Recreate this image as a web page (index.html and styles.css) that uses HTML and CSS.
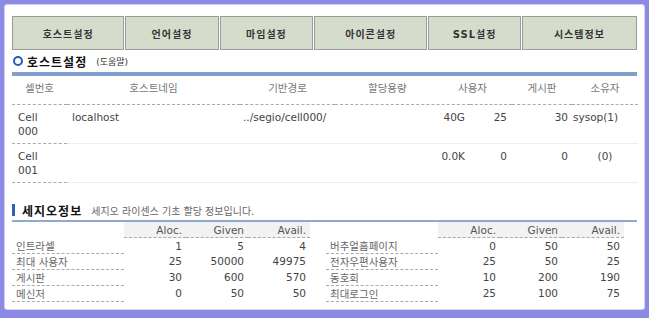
FILE: index.html
```html
<!DOCTYPE html>
<html lang="ko">
<head>
  <meta charset="UTF-8">
  <title>호스트설정</title>
  <link rel="stylesheet" href="styles.css">
</head>
<body>

  <div class="frame">
    <ul class="tabs">
      <li class="t1">호스트설정</li>
      <li class="t2">언어설정</li>
      <li class="t3">마임설정</li>
      <li class="t4">아이콘설정</li>
      <li class="t5">SSL설정</li>
      <li class="t6">시스템정보</li>
    </ul>

    <div class="title">
      <span class="ring"></span>
      <b>호스트설정</b>
      <span class="help">(도움말)</span>
    </div>
    <div class="bar"></div>

    <table class="hosts">
      <colgroup>
        <col style="width:55px">
        <col style="width:173px">
        <col style="width:95px">
        <col style="width:135px">
        <col style="width:42px">
        <col style="width:60px">
        <col style="width:66px">
      </colgroup>
      <thead>
        <tr>
          <th>셀번호</th>
          <th>호스트네임</th>
          <th>기반경로</th>
          <th class="c4">할당용량</th>
          <th class="c5">사용자</th>
          <th>게시판</th>
          <th>소유자</th>
        </tr>
      </thead>
      <tbody>
        <tr>
          <td class="c1">Cell<br>000</td>
          <td>localhost</td>
          <td class="c3">../segio/cell000/</td>
          <td class="num">40G</td>
          <td class="num">25</td>
          <td class="num">30</td>
          <td class="c7">sysop(1)</td>
        </tr>
        <tr>
          <td class="c1">Cell<br>001</td>
          <td></td>
          <td class="c3"></td>
          <td class="num">0.0K</td>
          <td class="num">0</td>
          <td class="num">0</td>
          <td class="mid">(0)</td>
        </tr>
      </tbody>
    </table>

    <div class="title2">
      <span class="mark"></span>
      <b>세지오정보</b>
      <span class="desc">세지오 라이센스 기초 할당 정보입니다.</span>
    </div>
    <div class="line"></div>

    <div class="lic">
      <table class="quota">
        <tr>
          <th class="lbl"></th>
          <th>Aloc.</th>
          <th>Given</th>
          <th>Avail.</th>
        </tr>
        <tr><td class="lbl">인트라셀</td><td>1</td><td>5</td><td>4</td></tr>
        <tr><td class="lbl">최대 사용자</td><td>25</td><td>50000</td><td>49975</td></tr>
        <tr><td class="lbl">게시판</td><td>30</td><td>600</td><td>570</td></tr>
        <tr><td class="lbl">메신저</td><td>0</td><td>50</td><td>50</td></tr>
      </table>

      <table class="quota right">
        <tr>
          <th class="lbl"></th>
          <th>Aloc.</th>
          <th>Given</th>
          <th>Avail.</th>
        </tr>
        <tr><td class="lbl">버추얼홈페이지</td><td>0</td><td>50</td><td>50</td></tr>
        <tr><td class="lbl">전자우편사용자</td><td>25</td><td>50</td><td>25</td></tr>
        <tr><td class="lbl">동호회</td><td>10</td><td>200</td><td>190</td></tr>
        <tr><td class="lbl">최대로그인</td><td>25</td><td>100</td><td>75</td></tr>
      </table>
    </div>
  </div>

</body>
</html>
```

FILE: styles.css
```css
body {
  margin: 0;
  padding: 4px;
  background: #8b8be6;
  font-family: "DejaVu Sans", "Noto Sans CJK KR", sans-serif;
  font-size: 10.5px;
  color: #444;
}

.frame {
  background: #fff;
  border: 1px solid #d6d0f4;
  border-radius: 3px;
  height: 306px;
  box-sizing: border-box;
  padding: 11px 7px 0 7px;
}

.tabs {
  list-style: none;
  display: flex;
  gap: 1px;
  margin: 0;
  padding: 0;
}

.tabs li {
  height: 34px;
  box-sizing: border-box;
  background: #d5dccc;
  border: 1px solid #9a9a9a;
  display: flex;
  align-items: center;
  justify-content: center;
  font-weight: bold;
  font-size: 10px;
  letter-spacing: 1px;
  color: #333;
}

.t1 { width: 113px; }
.t2 { width: 94px; }
.t3 { width: 94px; }
.t4 { width: 114px; }
.t5 { width: 93px; }
.t6 { width: 116px; }

.title {
  height: 22px;
  display: flex;
  align-items: center;
  padding-left: 1px;
}

.ring {
  width: 6px;
  height: 6px;
  border: 2.5px solid #1d5eb6;
  border-radius: 50%;
  margin-right: 4px;
}

.title b {
  font-size: 12px;
  letter-spacing: 1px;
  color: #111;
  margin-right: 9px;
}

.help {
  font-size: 9px;
  color: #333;
}

.bar {
  height: 4px;
  background: #809fca;
}

.hosts {
  width: 626px;
  table-layout: fixed;
  border-collapse: collapse;
}

.hosts th {
  font-weight: normal;
  color: #777;
  line-height: 14px;
  padding: 5px 0 9px;
  border-bottom: 1px dashed #aaa;
  text-align: center;
  white-space: nowrap;
}

.hosts th.c4 {
  text-align: left;
  padding-left: 33px;
}

.hosts th.c5 {
  text-align: left;
  text-indent: -12px;
}

.hosts td {
  vertical-align: top;
  padding: 5px 5px 5px;
  line-height: 14px;
  height: 28px;
  border-bottom: 1px solid #eee;
  color: #444;
  white-space: nowrap;
  overflow: visible;
}

.hosts td.c1 {
  border-bottom: 1px dashed #aaa;
  padding-left: 6px;
}

.hosts td.c3 { padding-left: 3px; }
.hosts td.c7 { padding-left: 1px; padding-right: 0; }

.num { text-align: right; }
.hosts td.num:nth-child(6) { padding-right: 4px; }
.mid { text-align: center; }

.title2 {
  display: flex;
  align-items: center;
  margin-top: 17px;
  height: 20px;
}

.mark {
  width: 3px;
  height: 12px;
  background: #2f62b0;
  margin-right: 7px;
}

.title2 b {
  font-size: 12px;
  letter-spacing: 1px;
  color: #111;
  margin-right: 9px;
}

.desc {
  color: #666;
  font-size: 10px;
}

.line {
  height: 2px;
  background: #8fa9cf;
}

.lic {
  display: flex;
  justify-content: space-between;
}

.quota {
  border-collapse: collapse;
}

.quota th {
  font-weight: normal;
  color: #555;
  background: #f2f2f2;
  text-align: right;
  padding: 1px 4px 0;
  height: 14px;
  border-bottom: 1px dashed #aaa;
}

.quota th.lbl {
  background: none;
  border-bottom: none;
}

.quota td {
  height: 15px;
  padding: 0 4px;
  text-align: right;
  color: #444;
  width: 54px;
}

.quota td.lbl {
  text-align: left;
  width: 104px;
  color: #666;
  border-bottom: 1px dashed #aaa;
}

.quota.right {
  margin-right: 13px;
}
```
